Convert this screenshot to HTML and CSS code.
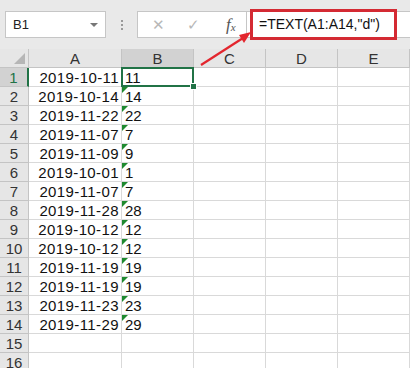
FILE: index.html
```html
<!DOCTYPE html>
<html lang="en">

<head>
    <meta charset="UTF-8">
    <meta name="viewport" content="width=device-width, initial-scale=1.0">
    <title>Sheet</title>
    <link rel="stylesheet" href="styles.css">
</head>

<body>
    <div class="toolbar">
        <div class="namebox">
            <span>B1</span>
            <span class="caret"></span>
        </div>
        <div class="grip">
            <i></i><i></i><i></i>
        </div>
        <div class="buttons">
            <span class="btn cancel">✕</span>
            <span class="btn ok">✓</span>
            <span class="btn fx">f<sub>x</sub></span>
        </div>
        <div class="formula">
            <span class="mark">=TEXT(A1:A14,"d")</span>
        </div>
    </div>

    <div class="sheet" id="sheet">
        <div class="hd corner"><span class="tri"></span></div>
        <div class="hd col">A</div>
        <div class="hd col sel">B</div>
        <div class="hd col">C</div>
        <div class="hd col">D</div>
        <div class="hd col">E</div>
    </div>

    <!-- arrow pointing at the formula -->
    <svg class="arrow" width="60" height="44" viewBox="0 0 60 44">
        <line x1="6" y1="36" x2="48" y2="9" stroke="#e3262e" stroke-width="2.2" />
        <polygon points="56,3 44,6 49,14" fill="#e3262e" />
    </svg>

    <script>
        const dates = ["2019-10-11", "2019-10-14", "2019-11-22", "2019-11-07", "2019-11-09", "2019-10-01", "2019-11-07",
            "2019-11-28", "2019-10-12", "2019-10-12", "2019-11-19", "2019-11-19", "2019-11-23", "2019-11-29"];
        const sheet = document.getElementById("sheet");

        for (let r = 1; r <= 16; r++) {
            let html = '<div class="hd row' + (r === 1 ? ' sel' : '') + '">' + r + '</div>';
            const d = dates[r - 1];
            html += '<div class="cell num">' + (d || '') + '</div>';
            if (d) {
                // day part stored as text, so it gets the green marker
                const day = String(parseInt(d.slice(8), 10));
                html += '<div class="cell txt' + (r === 1 ? ' active' : ' flag') + '">' + day + '</div>';
            } else {
                html += '<div class="cell"></div>';
            }
            html += '<div class="cell"></div><div class="cell"></div><div class="cell"></div>';
            sheet.insertAdjacentHTML("beforeend", html);
        }
    </script>
</body>

</html>
```

FILE: styles.css
```css
body {
    margin: 0;
    background-color: #e9e9e9;
    font-family: "Liberation Sans", Arial, sans-serif;
    width: 410px;
    height: 368px;
    overflow: hidden;
    position: relative;
}

.toolbar {
    height: 49px;
    display: flex;
    align-items: flex-start;
    padding-top: 11px;
    padding-left: 5px;
    box-sizing: border-box;
}

.namebox {
    width: 101px;
    height: 27px;
    box-sizing: border-box;
    background: #fff;
    border: 1px solid #c6c6c6;
    display: flex;
    align-items: center;
    justify-content: space-between;
    padding: 0 7px 0 7px;
    font-size: 13px;
    color: #222;
}

.caret {
    width: 0;
    height: 0;
    border-left: 4px solid transparent;
    border-right: 4px solid transparent;
    border-top: 4px solid #777;
}

.grip {
    width: 31px;
    height: 27px;
    display: flex;
    flex-direction: column;
    align-items: center;
    justify-content: center;
    gap: 2px;
}

.grip i {
    width: 2px;
    height: 2px;
    background: #9a9a9a;
}

.buttons {
    width: 110px;
    height: 27px;
    box-sizing: border-box;
    background: #fff;
    border: 1px solid #c6c6c6;
    display: flex;
    align-items: center;
}

.btn {
    color: #b8b8b8;
    font-size: 15px;
    text-align: center;
}

.cancel {
    width: 26px;
    margin-left: 7px;
}

.ok {
    width: 26px;
    margin-left: 9px;
}

.fx {
    margin-left: 20px;
    font-family: "Liberation Serif", serif;
    font-style: italic;
    font-size: 17px;
    color: #555;
}

.fx sub {
    font-size: 11px;
    vertical-align: -1px;
}

.formula {
    flex: 1;
    height: 27px;
    background: #fff;
    border-top: 1px solid #c6c6c6;
    border-bottom: 1px solid #c6c6c6;
    box-sizing: border-box;
}

.mark {
    display: block;
    width: 147px;
    height: 31px;
    margin: -3px 0 0 3px;
    box-sizing: border-box;
    border: 3px solid #d42a33;
    padding-left: 6px;
    font-size: 14px;
    line-height: 25px;
    color: #111;
}

.sheet {
    display: grid;
    grid-template-columns: 29px 93px 72px 72px 72px 72px;
    grid-auto-rows: 19px;
    background: #fff;
    font-size: 15px;
}

.hd {
    background: #e6e6e6;
    color: #333;
    border-right: 1px solid #c4c4c4;
    border-bottom: 1px solid #c4c4c4;
    box-sizing: border-box;
    text-align: center;
    line-height: 19px;
}

.hd.sel {
    background: #d2d2d2;
}

.col.sel {
    border-bottom: 1px solid #217346;
}

.row.sel {
    border-right: 2px solid #217346;
    color: #217346;
}

.corner {
    position: relative;
}

.tri {
    position: absolute;
    right: 3px;
    bottom: 3px;
    width: 0;
    height: 0;
    border-left: 11px solid transparent;
    border-bottom: 11px solid #b6b6b6;
}

.cell {
    border-right: 1px solid #d9d9d9;
    border-bottom: 1px solid #d9d9d9;
    box-sizing: border-box;
    line-height: 19px;
    color: #111;
    position: relative;
    white-space: nowrap;
}

.num {
    text-align: right;
    padding-right: 2px;
    letter-spacing: 0.4px;
}

.txt {
    padding-left: 3px;
}

.flag::before {
    content: "";
    position: absolute;
    left: 0;
    top: 0;
    width: 0;
    height: 0;
    border-top: 6px solid #1f8a2f;
    border-right: 6px solid transparent;
}

.active::after {
    content: "";
    position: absolute;
    left: -1px;
    top: -1px;
    right: -1px;
    bottom: -1px;
    border: 2px solid #217346;
}

.active::before {
    content: "";
    position: absolute;
    right: -4px;
    bottom: -4px;
    width: 5px;
    height: 5px;
    background: #217346;
    border: 1px solid #fff;
    z-index: 2;
}

.arrow {
    position: absolute;
    left: 195px;
    top: 29px;
}
```
